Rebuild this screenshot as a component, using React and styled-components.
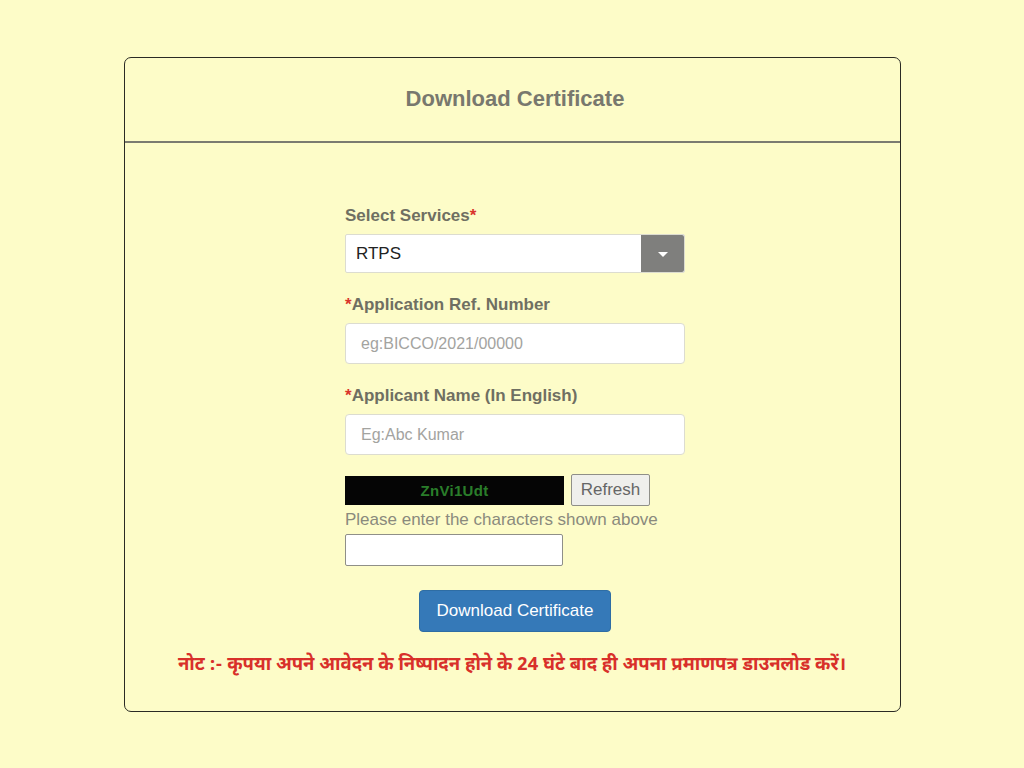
import React from 'react';
import styled, { createGlobalStyle } from 'styled-components';

const GlobalStyle = createGlobalStyle`
  html, body {
    margin: 0;
    padding: 0;
    background: #fdfcc8;
  }
  body {
    font-family: "Liberation Sans", Arial, sans-serif;
  }
`;

const Page = styled.div`
  width: 1024px;
  height: 768px;
  box-sizing: border-box;
  padding-top: 57px;
  display: flex;
  justify-content: center;
`;

const Card = styled.div`
  width: 777px;
  height: 655px;
  box-sizing: border-box;
  border: 1.5px solid #2a2a24;
  border-radius: 7px;
  display: flex;
  flex-direction: column;
`;

const Header = styled.div`
  height: 81px;
  border-bottom: 2px solid #7b7b70;
  display: flex;
  align-items: center;
  justify-content: center;
  padding: 0 0 2px 6px;
  box-sizing: content-box;
  font-size: 22px;
  font-weight: bold;
  color: #78786e;
`;

const Body = styled.div`
  display: flex;
  flex-direction: column;
  align-items: center;
  padding-top: 64px;
`;

const Form = styled.div`
  width: 340px;
  margin-left: 6px;
  display: flex;
  flex-direction: column;
`;

const Label = styled.label`
  font-size: 17px;
  font-weight: bold;
  color: #6f6f62;
  margin-bottom: 9px;
  line-height: 18px;
`;

const Star = styled.span`
  color: #d9342b;
`;

const SelectBox = styled.div`
  height: 39px;
  display: flex;
  background: #fff;
  border: 1px solid #dcdcd0;
  border-radius: 2px;
  box-sizing: border-box;
  margin-bottom: 23px;
`;

const SelectValue = styled.div`
  flex: 1;
  display: flex;
  align-items: center;
  padding-left: 10px;
  font-size: 17px;
  color: #222;
`;

const Caret = styled.div`
  width: 43px;
  background: #7f7f7d;
  display: flex;
  align-items: center;
  justify-content: center;
  border-radius: 0 2px 2px 0;
  &::after {
    content: '';
    border-left: 5px solid transparent;
    border-right: 5px solid transparent;
    border-top: 5px solid #fff;
    margin-top: 2px;
  }
`;

const TextInput = styled.input`
  height: 41px;
  box-sizing: border-box;
  border: 1px solid #dcdcd0;
  border-radius: 4px;
  background: #fff;
  padding: 0 15px;
  font-family: "Liberation Sans", Arial, sans-serif;
  font-size: 16px;
  margin-bottom: ${p => p.$gap || 23}px;
  outline: none;
  &::placeholder {
    color: #a3a3a0;
  }
`;

const CaptchaRow = styled.div`
  display: flex;
  align-items: center;
  gap: 7px;
`;

const CaptchaImage = styled.div`
  width: 219px;
  height: 29px;
  background: #050505;
  color: #2a7d2a;
  font-weight: bold;
  font-size: 15px;
  display: flex;
  align-items: center;
  justify-content: center;
  letter-spacing: 0.3px;
`;

const RefreshButton = styled.button`
  height: 32px;
  width: 79px;
  box-sizing: border-box;
  border: 1px solid #8f8f88;
  border-radius: 2px;
  background: #efefec;
  color: #666;
  font-family: "Liberation Sans", Arial, sans-serif;
  font-size: 17px;
  padding: 0;
`;

const Hint = styled.div`
  font-size: 17px;
  color: #8a8a7d;
  margin: 4px 0 5px;
  line-height: 19px;
`;

const CaptchaInput = styled.input`
  width: 218px;
  height: 32px;
  box-sizing: border-box;
  border: 1px solid #8f8f88;
  border-radius: 2px;
  background: #fff;
  outline: none;
`;

const SubmitButton = styled.button`
  align-self: center;
  margin-top: 24px;
  width: 192px;
  height: 42px;
  border: 1px solid #2e6da4;
  border-radius: 4px;
  background: #3579b8;
  color: #fff;
  font-family: "Liberation Sans", Arial, sans-serif;
  font-size: 17px;
`;

const Note = styled.div`
  margin-top: 21px;
  font-family: "Noto Sans Devanagari", "Lohit Devanagari", "Mangal", "FreeSans", "Noto Sans", sans-serif;
  font-size: 18.5px;
  font-weight: bold;
  color: #d8302a;
  text-align: center;
`;

export default function App() {
  return (
    <>
      <GlobalStyle />
      <Page>
        <Card>
          <Header>Download Certificate</Header>
          <Body>
            <Form>
              <Label>
                Select Services<Star>*</Star>
              </Label>
              <SelectBox>
                <SelectValue>RTPS</SelectValue>
                <Caret />
              </SelectBox>
              <Label>
                <Star>*</Star>Application Ref. Number
              </Label>
              <TextInput placeholder="eg:BICCO/2021/00000" />
              <Label>
                <Star>*</Star>Applicant Name (In English)
              </Label>
              <TextInput placeholder="Eg:Abc Kumar" $gap={19} />
              <CaptchaRow>
                <CaptchaImage>ZnVi1Udt</CaptchaImage>
                <RefreshButton>Refresh</RefreshButton>
              </CaptchaRow>
              <Hint>Please enter the characters shown above</Hint>
              <CaptchaInput />
              <SubmitButton>Download Certificate</SubmitButton>
            </Form>
            <Note>
              नोट :- कृपया अपने आवेदन के निष्पादन होने के 24 घंटे बाद ही अपना प्रमाणपत्र डाउनलोड करें।
            </Note>
          </Body>
        </Card>
      </Page>
    </>
  );
}
